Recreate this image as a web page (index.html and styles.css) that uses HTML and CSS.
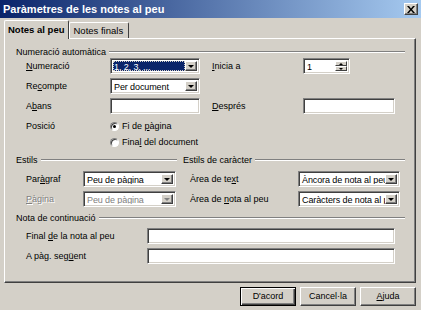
FILE: index.html
```html
<!DOCTYPE html>
<html lang="ca">
<head>
    <meta charset="UTF-8">
    <title>Paràmetres de les notes al peu</title>
    <link rel="stylesheet" href="styles.css">
</head>
<body>
    <div class="dialog">
        <div class="titlebar">
            <span>Paràmetres de les notes al peu</span>
            <div class="close">
                <svg width="8" height="7" viewBox="0 0 8 7"><path d="M0 0h2l2 2.5 2-2.5h2l-3 3.5 3 3.5h-2l-2-2.5-2 2.5h-2l3-3.5z" fill="#000"/></svg>
            </div>
        </div>

        <div class="tabs">
            <div class="tab active">Notes al peu</div>
            <div class="tab">Notes finals</div>
        </div>

        <div class="panel">
            <!-- Numeració automàtica -->
            <div class="group">Numeració automàtica</div>
            <div class="numbering">
                <div class="label"><u>N</u>umeració</div>
                <div class="combo focused"><span class="value">1, 2, 3, ...</span><span class="drop"></span></div>
                <div class="label"><u>I</u>nicia a</div>
                <div class="spin"><span class="value">1</span><span class="arrows"><span class="up"></span><span class="down"></span></span></div>

                <div class="label">Re<u>c</u>ompte</div>
                <div class="combo"><span class="value">Per document</span><span class="drop"></span></div>
                <div></div>
                <div></div>

                <div class="label">A<u>b</u>ans</div>
                <div class="field"></div>
                <div class="label"><u>D</u>esprés</div>
                <div class="field wide"></div>

                <div class="label">Posició</div>
                <div class="radios">
                    <div class="radio"><span class="dot checked"></span><span>Fi de <u>p</u>àgina</span></div>
                    <div class="radio"><span class="dot"></span><span>Fina<u>l</u> del document</span></div>
                </div>
            </div>

            <!-- Estils -->
            <div class="styles">
                <div class="col left">
                    <div class="group">Estils</div>
                    <div class="rows">
                        <div class="label">Par<u>à</u>graf</div>
                        <div class="combo"><span class="value">Peu de pàgina</span><span class="drop"></span></div>
                        <div class="label disabled"><u>P</u>àgina</div>
                        <div class="combo disabled"><span class="value">Peu de pàgina</span><span class="drop"></span></div>
                    </div>
                </div>
                <div class="col right">
                    <div class="group">Estils de caràcter</div>
                    <div class="rows">
                        <div class="label">Àrea de te<u>x</u>t</div>
                        <div class="combo"><span class="value">Àncora de nota al peu</span><span class="drop"></span></div>
                        <div class="label">Àrea de <u>n</u>ota al peu</div>
                        <div class="combo"><span class="value">Caràcters de nota al peu</span><span class="drop"></span></div>
                    </div>
                </div>
            </div>

            <!-- Nota de continuació -->
            <div class="group">Nota de continuació</div>
            <div class="continuation">
                <div class="label">Final <u>d</u>e la nota al peu</div>
                <div class="field"></div>
                <div class="label">A pàg. seg<u>ü</u>ent</div>
                <div class="field"></div>
            </div>
        </div>

        <div class="buttons">
            <div class="btn default">D'acord</div>
            <div class="btn">Cancel·la</div>
            <div class="btn"><u>A</u>juda</div>
        </div>
    </div>
</body>
</html>
```

FILE: styles.css
```css
* {
    box-sizing: border-box;
}
body {
    margin: 0;
    background-color: #d4d0c8;
    font-family: 'Liberation Sans', Arial, sans-serif;
    font-size: 9px;
    color: #000;
}
.dialog {
    width: 421px;
    height: 310px;
    display: flex;
    flex-direction: column;
}
u {
    text-decoration-thickness: 1px;
    text-underline-offset: 1px;
}

/* Title bar */
.titlebar {
    height: 18px;
    padding: 0 3px;
    background: linear-gradient(to right, #0a246a, #a6caf0);
    color: #fff;
    font-weight: bold;
    font-size: 11px;
    display: flex;
    align-items: center;
    justify-content: space-between;
}
.close {
    width: 14px;
    height: 12px;
    background-color: #d4d0c8;
    border: 1px solid;
    border-color: #fff #404040 #404040 #fff;
    box-shadow: inset -1px -1px #808080;
    display: flex;
    align-items: center;
    justify-content: center;
}

/* Tabs */
.tabs {
    height: 20px;
    padding-left: 4px;
    display: flex;
    align-items: flex-end;
    font-size: 9.5px;
}
.tab {
    height: 16px;
    padding: 0 5px 0 4px;
    line-height: 15px;
    border: 1px solid;
    border-bottom: none;
    border-color: #fff #404040 #fff #fff;
    border-radius: 2px 2px 0 0;
    background-color: #d4d0c8;
}
.tab.active {
    height: 19px;
    margin-bottom: -1px;
    padding: 0 3px 0 3px;
    line-height: 17px;
    font-weight: bold;
    position: relative;
    z-index: 1;
}

/* Tab panel */
.panel {
    height: 245px;
    margin: 0 5px 0 4px;
    padding: 7px 10px 0 11px;
    border: 1px solid;
    border-color: #fff #404040 #404040 #fff;
    box-shadow: inset -1px -1px #808080;
}
.group {
    height: 12px;
    display: flex;
    align-items: center;
    gap: 3px;
    white-space: nowrap;
}
.group::after {
    content: "";
    flex: 1;
    border-top: 1px solid #808080;
    border-bottom: 1px solid #fff;
}
.label {
    line-height: 16px;
    white-space: nowrap;
}
.label.disabled {
    color: #808080;
    text-shadow: 1px 1px #fff;
}

/* Sunken controls */
.field,
.combo,
.spin {
    height: 16px;
    background-color: #fff;
    border: 1px solid;
    border-color: #808080 #fff #fff #808080;
    box-shadow: inset 1px 1px #404040, inset -1px -1px #d4d0c8;
}
.combo,
.spin {
    display: flex;
    padding: 2px;
}
.value {
    flex: 1;
    overflow: hidden;
    white-space: nowrap;
    line-height: 12px;
    padding-left: 1px;
    letter-spacing: -0.1px;
}
.combo.focused .value {
    background-color: #0a246a;
    color: #fff;
    outline: 1px dotted #d4d0c8;
    outline-offset: -1px;
}
.combo.disabled .value {
    color: #808080;
}
.drop {
    width: 12px;
    flex: none;
    background-color: #d4d0c8;
    border: 1px solid;
    border-color: #fff #404040 #404040 #fff;
    box-shadow: inset -1px -1px #808080;
    display: flex;
    align-items: center;
    justify-content: center;
}
.drop::after {
    content: "";
    border-left: 3px solid transparent;
    border-right: 3px solid transparent;
    border-top: 3px solid #000;
}
.combo.disabled .drop::after {
    border-top-color: #808080;
}
.arrows {
    width: 12px;
    display: flex;
    flex-direction: column;
}
.arrows span {
    flex: 1;
    background-color: #d4d0c8;
    border: 1px solid;
    border-color: #fff #404040 #404040 #fff;
    display: flex;
    align-items: center;
    justify-content: center;
}
.arrows .up::after {
    content: "";
    border-left: 2px solid transparent;
    border-right: 2px solid transparent;
    border-bottom: 2px solid #000;
}
.arrows .down::after {
    content: "";
    border-left: 2px solid transparent;
    border-right: 2px solid transparent;
    border-top: 2px solid #000;
}

/* Numeració automàtica */
.numbering {
    margin-left: 10px;
    display: grid;
    grid-template-columns: 84px 102px 91px 92px;
    grid-template-rows: 16px 16px 16px auto;
    row-gap: 4px;
}
.numbering .combo,
.numbering .field {
    width: 90px;
}
.numbering .field.wide {
    width: 92px;
}
.numbering .spin {
    width: 47px;
}
.radios {
    grid-column: 2 / 5;
}
.radio {
    height: 16px;
    display: flex;
    align-items: center;
    gap: 3px;
    white-space: nowrap;
}
.dot {
    width: 9px;
    height: 9px;
    border-radius: 50%;
    background-color: #fff;
    border: 1px solid;
    border-color: #808080 #fff #fff #808080;
    box-shadow: inset 1px 1px #404040;
    display: flex;
    align-items: center;
    justify-content: center;
}
.dot.checked::after {
    content: "";
    width: 3px;
    height: 3px;
    border-radius: 50%;
    background-color: #000;
}

/* Estils */
.styles {
    margin-top: 4px;
    display: grid;
    grid-template-columns: 167px 1fr;
}
.col.left {
    padding-right: 6px;
}
.rows {
    margin-top: 5px;
    display: grid;
    grid-auto-rows: 16px;
    row-gap: 4px;
}
.left .rows {
    margin-left: 10px;
    grid-template-columns: 57px 93px;
}
.right .rows {
    margin-left: 7px;
    grid-template-columns: 108px 102px;
}

/* Nota de continuació */
.styles + .group {
    margin-top: 5px;
}
.continuation {
    margin: 4px 0 0 10px;
    display: grid;
    grid-template-columns: 121px 248px;
    grid-auto-rows: 16px;
    row-gap: 4px;
}

/* Buttons */
.buttons {
    margin-top: 4px;
    padding-right: 5px;
    display: flex;
    justify-content: flex-end;
    gap: 4px;
}
.btn {
    width: 56px;
    height: 19px;
    line-height: 17px;
    text-align: center;
    border: 1px solid;
    border-color: #fff #404040 #404040 #fff;
    box-shadow: inset -1px -1px #808080;
}
.btn.default {
    border-color: #000;
    box-shadow: inset 1px 1px #fff, inset -1px -1px #404040, inset -2px -2px #808080;
}
```
